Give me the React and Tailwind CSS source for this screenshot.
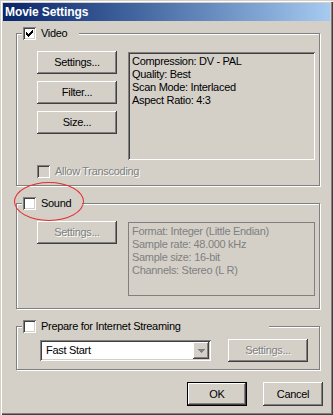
import React from "react";

const sunken =
  "shadow-[inset_1px_1px_0_#808080,inset_-1px_-1px_0_#fff,inset_2px_2px_0_#404040,inset_-2px_-2px_0_#d4d0c8]";
const raised =
  "shadow-[inset_-1px_-1px_0_#404040,inset_1px_1px_0_#fff,inset_-2px_-2px_0_#808080,inset_2px_2px_0_#d4d0c8]";
const embossed = "text-[#808080] [text-shadow:1px_1px_0_#fff]";

function Check() {
  return (
    <svg width="7" height="7" viewBox="0 0 7 7" shapeRendering="crispEdges">
      <path
        fill="#000"
        d="M0 2h1v3H0zM1 3h1v3H1zM2 4h1v3H2zM3 3h1v3H3zM4 2h1v3H4zM5 1h1v3H5zM6 0h1v3H6z"
      />
    </svg>
  );
}

function Checkbox({ checked, disabled }) {
  return (
    <span
      className={`w-[13px] h-[13px] shrink-0 flex items-center justify-center ${sunken} ${
        disabled ? "bg-[#d4d0c8]" : "bg-white"
      }`}
    >
      {checked && <Check />}
    </span>
  );
}

function Button({ children, disabled, isDefault, className = "" }) {
  return (
    <div
      className={`h-[23px] flex items-center justify-center bg-[#d4d0c8] ${raised} ${
        isDefault ? "border border-black" : ""
      } ${disabled ? embossed : "text-black"} ${className}`}
    >
      {children}
    </div>
  );
}

function Group({ label, checked, legendWidth, className = "", children }) {
  return (
    <div
      className={`border border-[#808080] shadow-[inset_1px_1px_0_#fff,1px_1px_0_#fff] ${className}`}
    >
      {/* Legend sits over the top edge */}
      <div
        className="-mt-[7px] ml-[5px] pl-px h-[13px] flex items-center bg-[#d4d0c8]"
        style={{ width: legendWidth }}
      >
        <Checkbox checked={checked} />
        <span className="ml-[5px] whitespace-nowrap">{label}</span>
      </div>
      {children}
    </div>
  );
}

export default function App() {
  return (
    <div className="relative w-[333px] h-[415px] bg-[#d4d0c8] p-[3px] flex flex-col font-['Liberation_Sans',Arial,sans-serif] text-[11px] leading-[13px] tracking-[-0.3px] text-black shadow-[inset_1px_1px_0_#d4d0c8,inset_2px_2px_0_#fff,inset_-1px_-1px_0_#404040,inset_-2px_-2px_0_#808080]">
      {/* Title bar */}
      <div className="h-[18px] shrink-0 flex items-center pl-[2px] bg-linear-to-r from-[#0a246a] to-[#a6caf0]">
        <span className="text-white font-bold text-[12px] tracking-[-0.1px]">
          Movie Settings
        </span>
      </div>

      <div className="flex flex-col pl-[13px] pr-[10px]">
        {/* Video */}
        <Group label="Video" checked legendWidth={57} className="mt-[12px]">
          <div className="pl-[20px] pr-[4px] pb-[7px]">
            <div className="mt-[11px] flex gap-[11px]">
              <div className="w-[80px] flex flex-col gap-[7px]">
                <Button>Settings...</Button>
                <Button>Filter...</Button>
                <Button>Size...</Button>
              </div>
              <div className={`flex-1 mt-px h-[108px] pl-[4px] pt-[3px] ${sunken}`}>
                <p>Compression: DV - PAL</p>
                <p>Quality: Best</p>
                <p>Scan Mode: Interlaced</p>
                <p>Aspect Ratio: 4:3</p>
              </div>
            </div>
            <div className="mt-[5px] flex items-center">
              <Checkbox disabled />
              <span className={`ml-[5px] ${embossed}`}>Allow Transcoding</span>
            </div>
          </div>
        </Group>

        {/* Sound */}
        <Group label="Sound" legendWidth={60} className="mt-[17px]">
          <div className="pl-[20px] pr-[4px] pb-[12px]">
            <div className="mt-[11px] flex gap-[11px]">
              <Button disabled className="w-[80px]">
                Settings...
              </Button>
              <div className="flex-1 mt-px h-[74px] pl-[3px] pt-[2px] border border-[#808080] text-[#808080]">
                <p>Format: Integer (Little Endian)</p>
                <p>Sample rate: 48.000 kHz</p>
                <p>Sample size: 16-bit</p>
                <p>Channels: Stereo (L R)</p>
              </div>
            </div>
          </div>
        </Group>

        {/* Streaming */}
        <Group
          label="Prepare for Internet Streaming"
          legendWidth={247}
          className="mt-[17px]"
        >
          <div className="pl-[23px] pr-[11px] pb-[7px]">
            <div className="mt-[6px] flex items-center gap-[17px]">
              <div className={`w-[171px] h-[21px] bg-white flex items-center p-[2px] ${sunken}`}>
                <span className="flex-1 pl-[4px]">Fast Start</span>
                <div className={`w-[16px] h-[17px] bg-[#d4d0c8] flex items-center justify-center ${raised}`}>
                  <svg width="7" height="4" viewBox="0 0 7 4" shapeRendering="crispEdges">
                    <path fill="#808080" d="M0 0h7v1H0zM1 1h5v1H1zM2 2h3v1H2zM3 3h1v1H3z" />
                  </svg>
                </div>
              </div>
              <Button disabled className="w-[80px]">
                Settings...
              </Button>
            </div>
          </div>
        </Group>

        {/* Dialog buttons */}
        <div className="mt-[12px] -mr-[3px] flex justify-end gap-[16px]">
          <Button isDefault className="w-[60px] h-[24px]">
            OK
          </Button>
          <Button className="w-[60px] h-[24px]">Cancel</Button>
        </div>
      </div>

      {/* Red annotation ellipse */}
      <div className="absolute left-[14px] top-[182px] w-[70px] h-[39px] rounded-[50%] border border-[#e42d2d]" />
    </div>
  );
}
